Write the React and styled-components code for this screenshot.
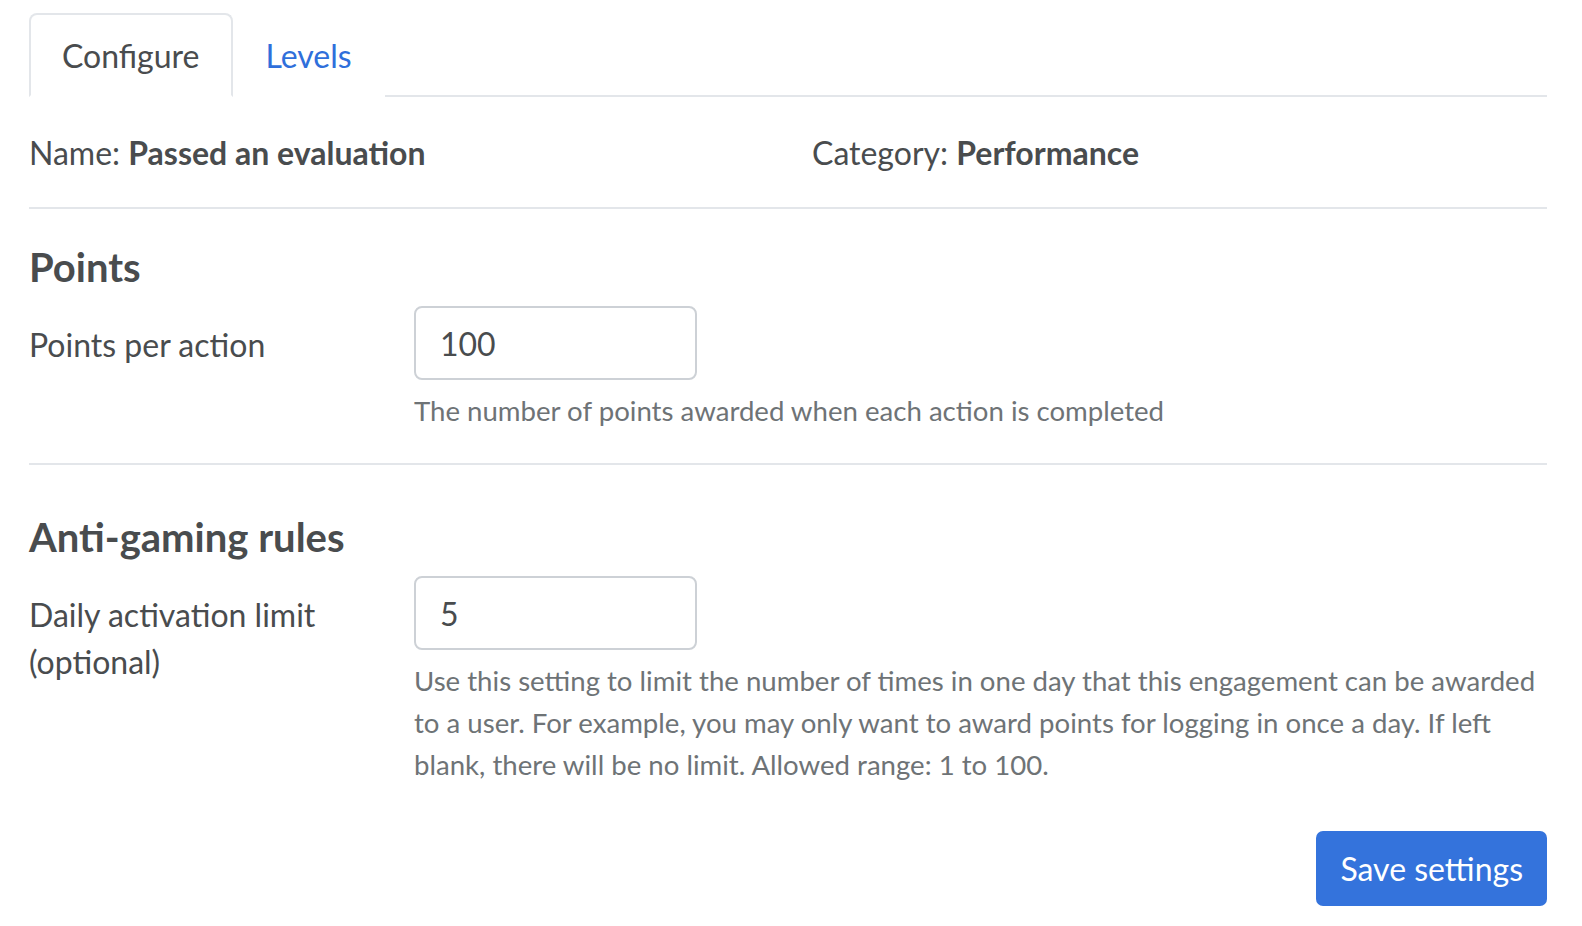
import React from "react";
import styled, { createGlobalStyle } from "styled-components";

const Global = createGlobalStyle`
  html, body { margin: 0; padding: 0; background: #fff; }
  body { font-family: Lato, "Noto Sans", sans-serif; color: #494c4e; }
  * { box-sizing: border-box; }
`;

const Page = styled.div`
  padding: 13px 35px 0 29px;
`;

const TabBar = styled.div`
  display: flex;
  align-items: flex-end;
  border-bottom: 2px solid #e3e6ea;
  height: 84px;
`;

const Tab = styled.button`
  font-family: inherit;
  font-size: 32px;
  background: #fff;
  height: 84px;
  margin-bottom: -2px;
  padding: 0 31px;
  border: 2px solid ${(p) => (p.$active ? "#e3e6ea" : "transparent")};
  border-bottom: 2px solid ${(p) => (p.$active ? "#fff" : "transparent")};
  border-radius: 8px 8px 0 0;
  color: ${(p) => (p.$active ? "#494c4e" : "#2f6fdb")};
  cursor: pointer;
`;

const InfoRow = styled.div`
  display: grid;
  grid-template-columns: 1fr 1fr;
  column-gap: 48px;
  font-size: 32px;
  height: 112px;
  align-items: center;
  border-bottom: 2px solid #e3e6ea;
`;

const Strong = styled.b`
  font-weight: 700;
`;

const Section = styled.section`
  padding: ${(p) => (p.$last ? "48px 0 45px" : "34px 0 31px")};
  border-bottom: ${(p) => (p.$last ? "none" : "2px solid #e3e6ea")};
`;

const Heading = styled.h2`
  margin: 0 0 15px;
  font-size: 40px;
  font-weight: 700;
  line-height: 48px;
  color: #494c4e;
`;

const Field = styled.div`
  display: grid;
  grid-template-columns: 385px 1fr;
`;

const Label = styled.label`
  font-size: 32px;
  line-height: 47px;
  padding-top: 15px;
`;

const Control = styled.div`
  display: flex;
  flex-direction: column;
`;

const Input = styled.input`
  width: 283px;
  height: 74px;
  border: 2px solid #cdd1d6;
  border-radius: 8px;
  padding: 0 24px;
  font-family: inherit;
  font-size: 32px;
  color: #494c4e;
  outline: none;
`;

const Help = styled.p`
  margin: 10px 0 0;
  font-size: 27.6px;
  line-height: 42px;
  color: #6e7376;
`;

const Footer = styled.div`
  display: flex;
  justify-content: flex-end;
`;

const Button = styled.button`
  font-family: inherit;
  font-size: 32px;
  background: #3473dc;
  color: #fff;
  border: none;
  border-radius: 7px;
  height: 75px;
  padding: 0 24px;
  cursor: pointer;
`;

export default function App() {
  return (
    <>
      <Global />
      <Page>
        <TabBar>
          <Tab $active>Configure</Tab>
          <Tab>Levels</Tab>
        </TabBar>
        <InfoRow>
          <div>
            Name: <Strong>Passed an evaluation</Strong>
          </div>
          <div>
            Category: <Strong>Performance</Strong>
          </div>
        </InfoRow>
        <Section>
          <Heading>Points</Heading>
          <Field>
            <Label>Points per action</Label>
            <Control>
              <Input defaultValue="100" />
              <Help>The number of points awarded when each action is completed</Help>
            </Control>
          </Field>
        </Section>
        <Section $last>
          <Heading>Anti-gaming rules</Heading>
          <Field>
            <Label>
              Daily activation limit
              <br />
              (optional)
            </Label>
            <Control>
              <Input defaultValue="5" />
              <Help>
                Use this setting to limit the number of times in one day that this engagement can be awarded to a
                user. For example, you may only want to award points for logging in once a day. If left blank, there
                will be no limit. Allowed range: 1 to 100.
              </Help>
            </Control>
          </Field>
        </Section>
        <Footer>
          <Button>Save settings</Button>
        </Footer>
      </Page>
    </>
  );
}
